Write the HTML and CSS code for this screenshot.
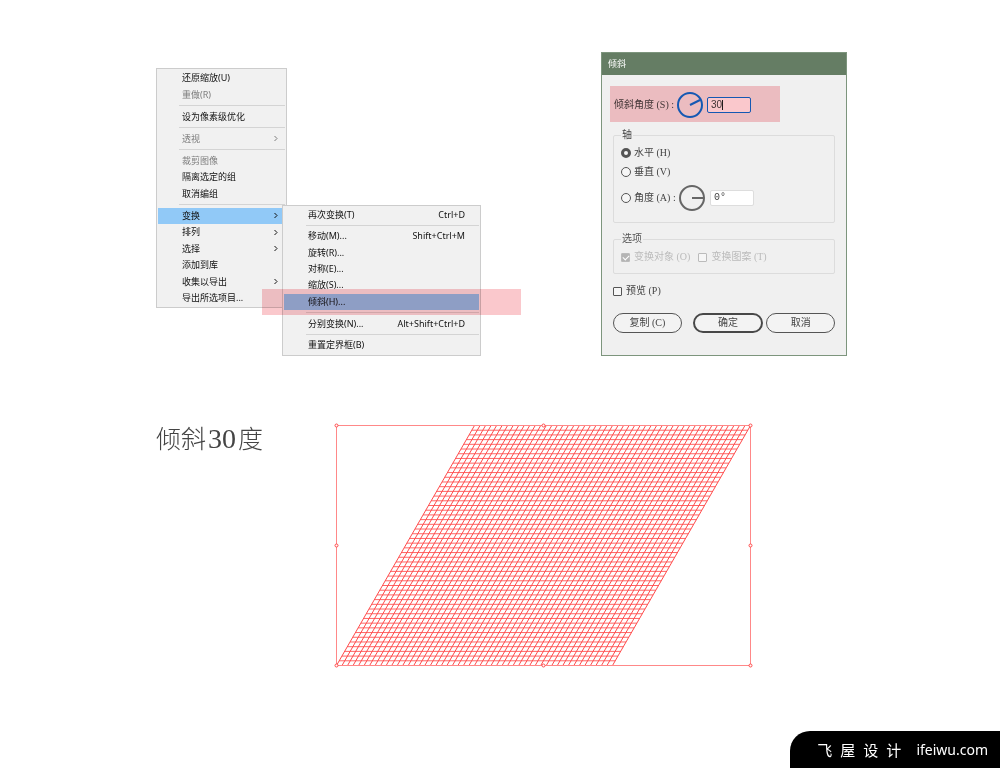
FILE: index.html
```html
<!DOCTYPE html>
<html lang="zh-CN">
<head>
<meta charset="utf-8">
<meta name="viewport" content="width=device-width, initial-scale=1">
<title>倾斜30度</title>
<link rel="stylesheet" href="styles.css">
</head>
<body>
<main class="tutorial">
  <div class="panels">
    <ul class="menu">
      <li class="item">还原缩放(U)</li>
      <li class="item disabled">重做(R)</li>
      <li class="separator"></li>
      <li class="item">设为像素级优化</li>
      <li class="separator"></li>
      <li class="item disabled">透视<svg class="arrow" viewBox="0 0 4 7"><path d="M.5 1 3 3.5 .5 6"/></svg></li>
      <li class="separator"></li>
      <li class="item disabled">裁剪图像</li>
      <li class="item">隔离选定的组</li>
      <li class="item">取消编组</li>
      <li class="separator"></li>
      <li class="item open">变换<svg class="arrow" viewBox="0 0 4 7"><path d="M.5 1 3 3.5 .5 6"/></svg>
        <ul class="menu submenu">
          <li class="item">再次变换(T)<kbd>Ctrl+D</kbd></li>
          <li class="separator"></li>
          <li class="item">移动(M)...<kbd>Shift+Ctrl+M</kbd></li>
          <li class="item">旋转(R)...</li>
          <li class="item">对称(E)...</li>
          <li class="item">缩放(S)...</li>
          <li class="item chosen">倾斜(H)...</li>
          <li class="separator"></li>
          <li class="item">分别变换(N)...<kbd>Alt+Shift+Ctrl+D</kbd></li>
          <li class="separator"></li>
          <li class="item">重置定界框(B)</li>
        </ul>
      </li>
      <li class="item">排列<svg class="arrow" viewBox="0 0 4 7"><path d="M.5 1 3 3.5 .5 6"/></svg></li>
      <li class="item">选择<svg class="arrow" viewBox="0 0 4 7"><path d="M.5 1 3 3.5 .5 6"/></svg></li>
      <li class="item">添加到库</li>
      <li class="item">收集以导出<svg class="arrow" viewBox="0 0 4 7"><path d="M.5 1 3 3.5 .5 6"/></svg></li>
      <li class="item">导出所选项目...</li>
    </ul>

    <form class="dialog">
      <h2 class="dialog-title">倾斜</h2>
      <div class="dialog-body">
        <div class="angle-row marked">
          <label for="shear">倾斜角度 (S) :</label>
          <svg class="dial dial-active" viewBox="0 0 26 26"><circle cx="13" cy="13" r="12"/><path d="M13 13 23 8"/></svg>
          <span class="caret-field"><input id="shear" class="field field-active" type="text" value="30"></span>
        </div>

        <fieldset class="group axis">
          <legend>轴</legend>
          <label class="choice"><input type="radio" name="axis" checked>水平 (H)</label>
          <label class="choice"><input type="radio" name="axis">垂直 (V)</label>
          <div class="angle-row">
            <label class="choice"><input type="radio" name="axis">角度 (A) :</label>
            <svg class="dial" viewBox="0 0 26 26"><circle cx="13" cy="13" r="12"/><path d="M13 13H25"/></svg>
            <input class="field" type="text" value="0°" aria-label="角度">
          </div>
        </fieldset>

        <fieldset class="group options" disabled>
          <legend>选项</legend>
          <label class="choice"><input type="checkbox" checked>变换对象 (O)</label>
          <label class="choice"><input type="checkbox">变换图案 (T)</label>
        </fieldset>

        <label class="choice preview"><input type="checkbox">预览 (P)</label>

        <div class="buttons">
          <button type="button" class="copy">复制 (C)</button>
          <button type="button" class="primary">确定</button>
          <button type="button">取消</button>
        </div>
      </div>
    </form>
  </div>

  <section class="result">
    <h1 class="caption">倾斜<span class="degrees">30</span>度</h1>
    <svg class="mesh" viewBox="0 0 420 246" role="img" aria-label="倾斜30度">
      <path id="rows" class="rows"/>
      <path id="columns" class="columns"/>
      <rect class="bounds" x="2.5" y="2.5" width="414" height="240"/>
      <g class="handles">
        <circle cx="2.5" cy="2.5" r="1.5"/><circle cx="209.5" cy="2.5" r="1.5"/><circle cx="416.5" cy="2.5" r="1.5"/>
        <circle cx="2.5" cy="122.5" r="1.5"/><circle cx="416.5" cy="122.5" r="1.5"/>
        <circle cx="2.5" cy="242.5" r="1.5"/><circle cx="209.5" cy="242.5" r="1.5"/><circle cx="416.5" cy="242.5" r="1.5"/>
      </g>
    </svg>
  </section>
</main>

<footer class="site"><span class="site-name">飞屋设计</span><span>ifeiwu.com</span></footer>
<script src="mesh.js"></script>
</body>
</html>
```
FILE: mesh.js
```js
// Draws a square mesh sheared to the right inside the bounding box.
const left = 2.5, top0 = 2.5, width = 276, height = 240, shear = 138;
const columnCount = 50, rowCount = 51;
let rows = "", columns = "";
for (let i = 0; i <= rowCount; i++) {
  const t = i / rowCount;
  rows += `M${left + shear * (1 - t)} ${top0 + height * t}h${width}`;
}
for (let i = 0; i <= columnCount; i++) {
  const x = left + width * i / columnCount;
  columns += `M${x + shear} ${top0}L${x} ${top0 + height}`;
}
document.getElementById("rows").setAttribute("d", rows);
document.getElementById("columns").setAttribute("d", columns);
```
FILE: styles.css
```css
* { box-sizing: border-box; }

body {
  margin: 0;
  min-height: 100vh;
  display: flex;
  flex-direction: column;
  background: #fff;
  color: #1a1a1a;
  font-family: "Noto Sans", "Noto Sans CJK SC", sans-serif;
}

.tutorial { padding: 52px 153px 0 156px; }

.panels {
  display: flex;
  justify-content: space-between;
  align-items: flex-start;
}

/* Menus */
.menu {
  list-style: none;
  margin: 16px 0 0;
  padding: 1px;
  width: 131px;
  min-height: 240px;
  display: flex;
  flex-direction: column;
  justify-content: space-between;
  background: #f1f1f1;
  border: 1px solid #ccc;
  font-size: 9px;
  line-height: 16px;
  white-space: nowrap;
}
.item {
  display: flex;
  align-items: center;
  justify-content: space-between;
  height: 16px;
  padding: 0 7px 0 24px;
  color: #111;
}
.item.disabled { color: #7d7d7d; }
.item.open { position: relative; background: #91c9f7; }
.separator {
  height: 1px;
  margin: 2px 0 2px 21px;
  background: #d4d4d4;
}
.arrow {
  width: 4px;
  height: 7px;
  fill: none;
  stroke: currentColor;
}
.submenu {
  position: absolute;
  left: 124px;
  top: -3px;
  width: 199px;
  min-height: 151px;
  margin: 0;
}
.submenu .item { padding-right: 14px; }
.submenu .separator { margin-left: 22px; }
.item.chosen { position: relative; background: #91c9f7; }
kbd { font: inherit; }

/* Pink marker laid over the highlighted controls */
.item.chosen::after,
.marked::after {
  content: "";
  position: absolute;
  inset: 0;
  background: #fac8cc;
  mix-blend-mode: multiply;
  pointer-events: none;
}
.item.chosen::after { inset: -5px -42px -5px -22px; }

/* Dialog */
.dialog {
  width: 246px;
  background: #f0f0f0;
  border: 1px solid #7d957d;
  color: #444;
  font-family: "Liberation Serif", "Noto Sans CJK SC", serif;
  font-size: 10px;
  line-height: 12px;
}
.dialog-title {
  margin: 0;
  padding: 0 6px;
  background: #657d64;
  color: #fff;
  font: 9px/22px "Noto Sans", "Noto Sans CJK SC", sans-serif;
}
.dialog-body { padding: 11px 11px 22px; }
.angle-row {
  display: flex;
  align-items: center;
}
.marked {
  position: relative;
  width: 170px;
  height: 36px;
  margin-left: -3px;
  padding: 2px 0 0 4px;
}
.marked label { width: 63px; }
.dial {
  flex: none;
  width: 26px;
  height: 26px;
  margin-right: 5px;
  fill: none;
  stroke: #666;
  stroke-width: 2;
}
.dial-active { stroke: #1470e0; margin-right: 4px; }
.field {
  width: 44px;
  height: 16px;
  padding: 0 3px 1px;
  border: 1px solid #ddd;
  border-radius: 2px;
  background: #fff;
  color: #444;
  font: 10px/12px "Liberation Mono", monospace;
}
.field-active {
  border-color: #1470e0;
  font-family: "Liberation Sans", sans-serif;
  display: block;
}
.caret-field { position: relative; }
.caret-field::after {
  content: "";
  position: absolute;
  left: 15px;
  top: 3px;
  width: 1px;
  height: 10px;
  background: #222;
}

.group {
  margin: 7px 0 0;
  padding: 0 7px;
  min-width: 0;
  border: 1px solid #dcdcdc;
  border-radius: 2px;
}
.group legend { padding: 0 1px; }
.axis { height: 94px; padding-top: 2px; }
.axis > .choice { height: 19px; }
.axis .angle-row { height: 33px; }
.axis .angle-row .choice { width: 58px; }
.options {
  display: flex;
  gap: 8px;
  height: 41px;
  margin-top: 10px;
  padding-top: 3px;
  color: #bbb;
}
.options legend { color: #555; }
.choice {
  display: flex;
  align-items: center;
  gap: 3px;
  white-space: nowrap;
}
.choice input {
  appearance: none;
  flex: none;
  width: 10px;
  height: 10px;
  margin: 0;
  border: 1px solid #555;
  background: #f6f6f6;
}
.choice input[type="radio"] { border-radius: 50%; }
.choice input[type="radio"]:checked { border: 3px solid #555; }
.choice input[type="checkbox"] {
  width: 9px;
  height: 9px;
  margin-right: 1px;
  border-radius: 1px;
}
.options .choice { height: 18px; }
.options input { border-color: #bbb; }
.options input:checked {
  background: #b4b4b4;
  display: grid;
  place-items: center;
}
.options input:checked::before {
  content: "";
  width: 5px;
  height: 3px;
  border: solid #fff;
  border-width: 0 0 1px 1px;
  transform: rotate(-45deg);
}
.preview { margin-top: 11px; }

.buttons {
  display: flex;
  gap: 3px;
  margin-top: 16px;
}
.buttons button {
  flex: 1;
  height: 20px;
  padding: 0;
  border: 1px solid #555;
  border-radius: 10px;
  background: #f3f3f3;
  color: #444;
  font: inherit;
}
.buttons .copy { margin-right: 8px; }
.buttons .primary { border: 2px solid #484848; }

/* Sheared mesh */
.result {
  display: flex;
  align-items: flex-start;
  margin-top: 67px;
}
.caption {
  flex: none;
  width: 178px;
  margin: 0;
  color: #444;
  font: 300 25px/32px "Liberation Serif", "Noto Sans CJK SC", serif;
}
.degrees { font-size: 28px; padding: 0 2px; }
.mesh { flex: none; width: 420px; height: 246px; }
.rows, .columns, .bounds, .handles { fill: none; stroke: #ff4a4a; }
.rows { opacity: .85; }
.bounds { stroke: #ff8888; }
.handles { fill: #fff; }

/* Site mark in the corner */
.site {
  display: flex;
  align-items: center;
  gap: 7px;
  align-self: flex-end;
  margin-top: auto;
  padding: 0 12px 0 27px;
  height: 37px;
  border-radius: 20px 0 0 0;
  background: #000;
  color: #fff;
  font-size: 14px;
}
.site-name { font-size: 15px; letter-spacing: 8px; }
```
